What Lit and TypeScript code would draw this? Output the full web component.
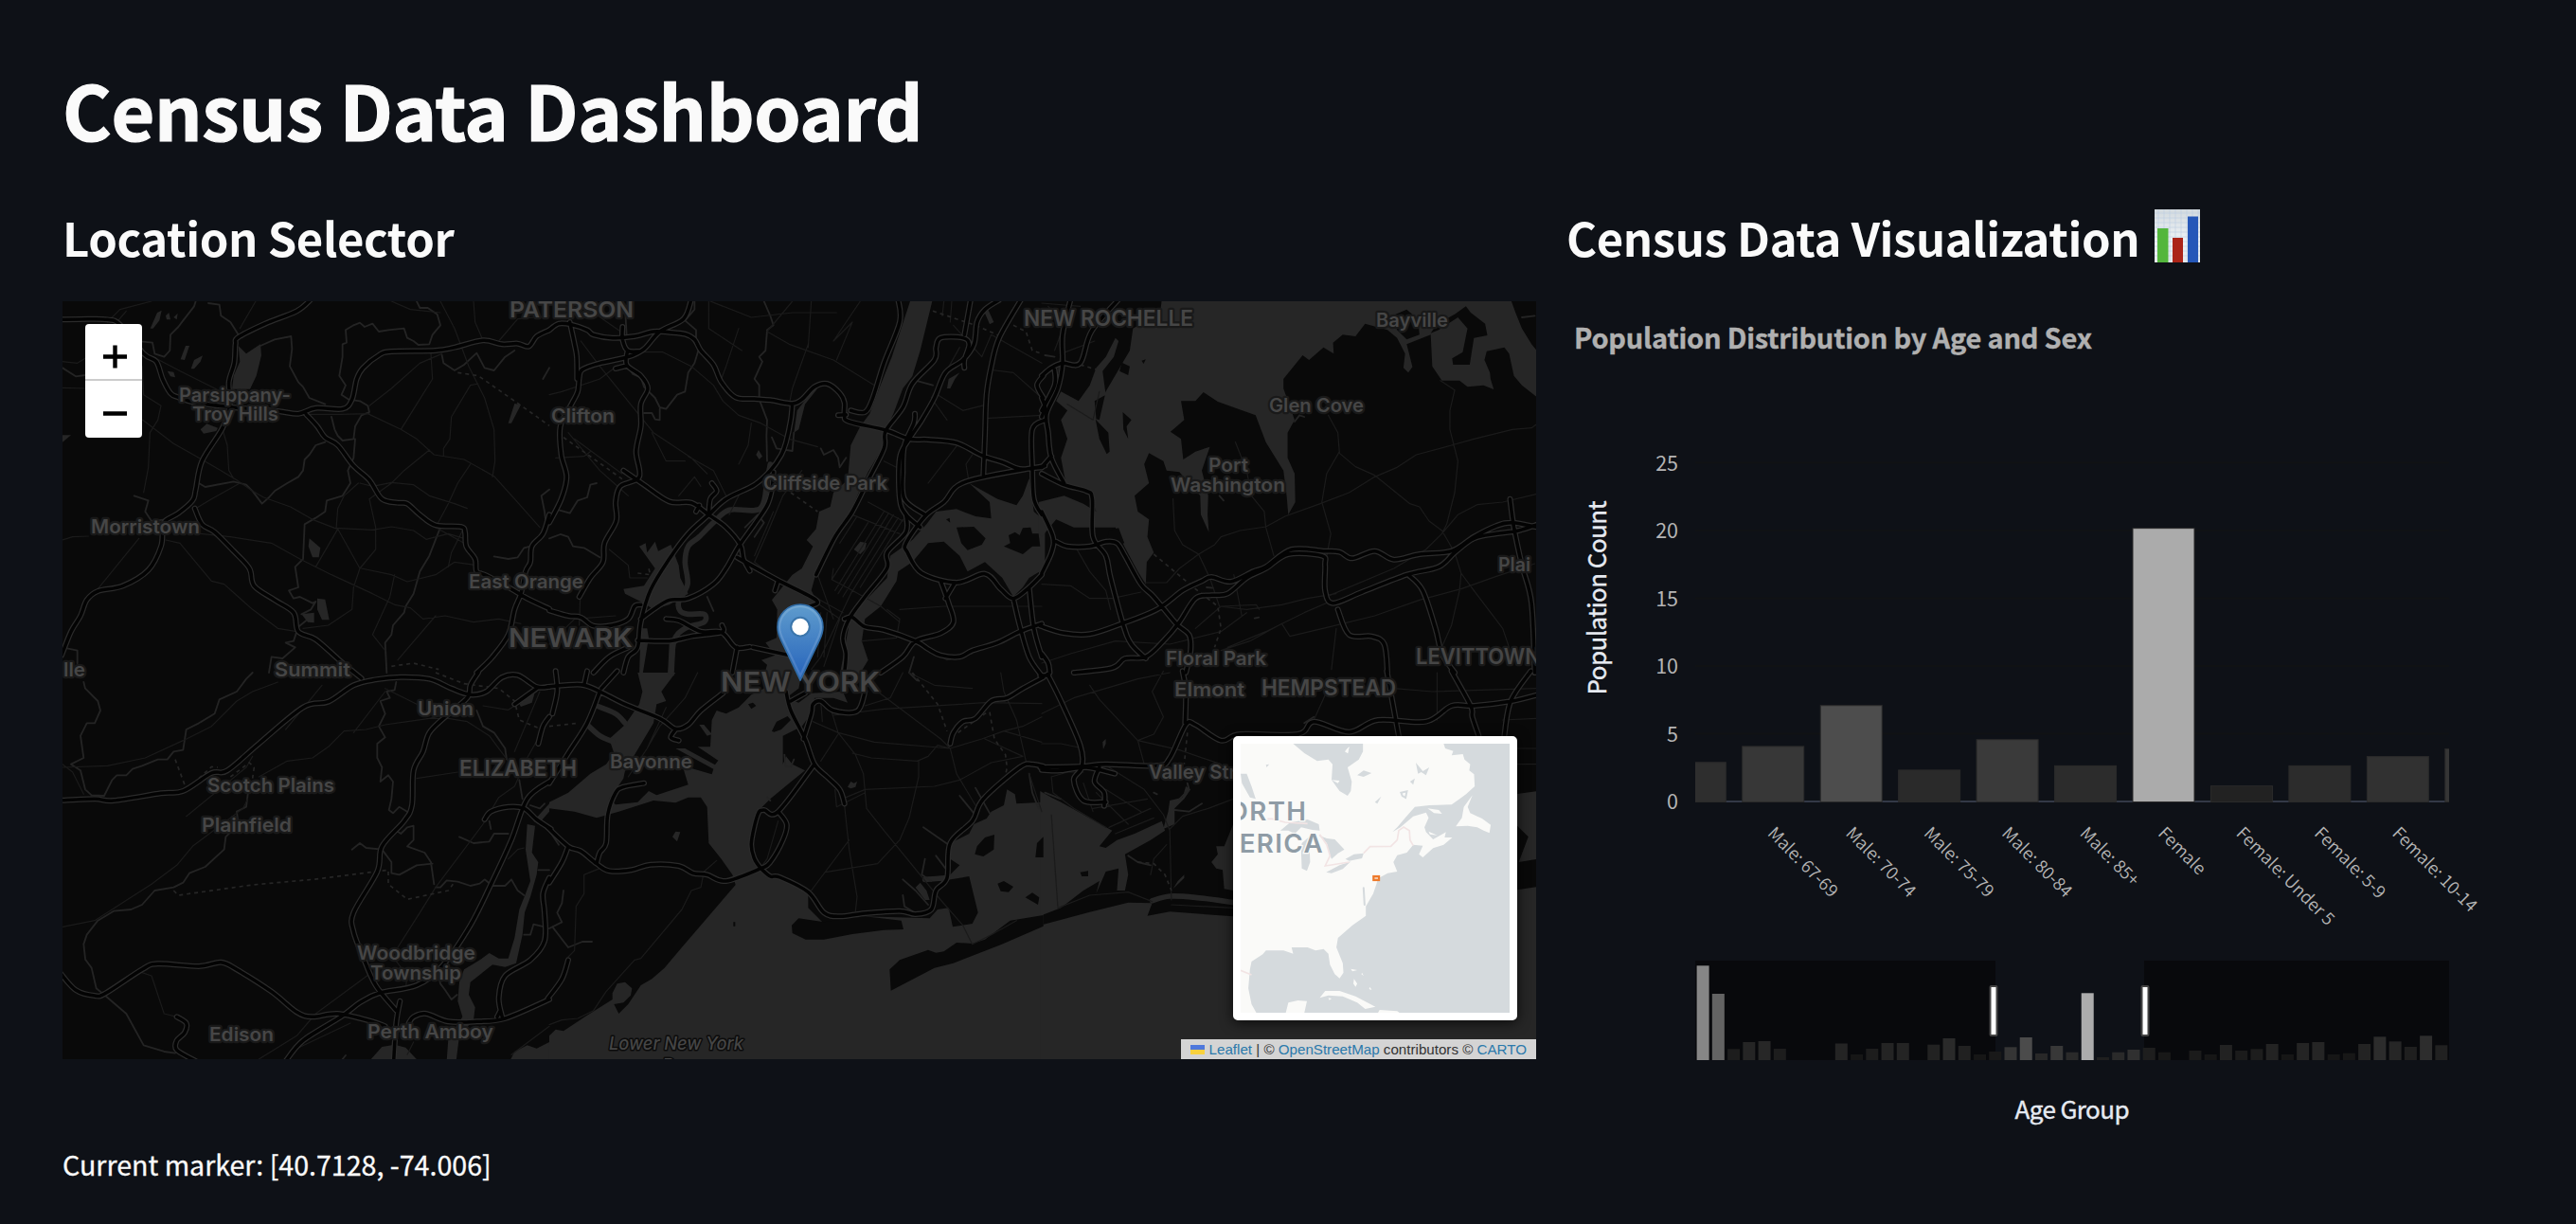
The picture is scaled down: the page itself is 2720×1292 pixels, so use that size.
import { LitElement, html, svg, css } from "lit";
import { customElement } from "lit/decorators.js";

interface Tile {
  at: string;
  water?: string[];
  land?: string[];
  channel?: string[];
  stream?: string[];
  minor?: string[];
  dash?: string[];
  road?: string[];
}

/* Every tile uses three local units per pixel; `at` places it on the map. */
const TILES: Tile[] = [
  {
    at: "translate(-6 -8) scale(.33333)",
    water: [
      "575,165 600,190 645,160 648,195 632,260 612,302 555,302 560,260 580,215",
      "455,430 475,412 510,425 505,435 465,443", "800,775 835,805 830,835 810,835 797,800",
      "825,965 850,968 863,1033 840,1033 825,1000", "775,1015 815,1010 815,1042 795,1040",
      "296,110 318,60 332,53 325,85 305,110", "18,448 45,448 18,470", "425,238 435,210 462,196 455,215 435,238",
      "1450,348 1470,352 1440,410 1430,410", "392,208 408,165 420,165 405,210", "350,245 370,248 375,265 360,262",
      "345,70 355,60 360,82 348,82", "370,75 383,62 380,82",
    ],
    stream: [
      "480,30 515,35 520,70 550,90 575,130", "440,24 435,40 400,85 385,105 360,130 358,180 340,200 310,190 303,155 272,152",
      "645,165 690,145 742,135 745,175 738,230 765,280 780,295 800,330 850,350",
      "940,100 960,92 975,105 1000,95 1020,120 1050,115 1100,110 1110,140 1130,150 1145,162 1180,160 1190,130 1215,100 1205,65 1175,45 1150,45 1140,24",
      "940,100 915,115 918,155 905,160 905,200 895,260 915,290 902,320 925,335", "925,335 960,340 985,355 990,375 965,385 945,420 940,460 905,465 890,450 880,430 870,390",
      "850,470 820,480 800,510 785,525 780,560 765,580 730,600 690,625 672,645 650,665 620,625 600,605 560,595 470,612 450,600",
      "945,460 940,520 922,560 930,600 905,640 855,655 850,690 820,710 785,730 780,840 755,865 765,930 735,940 750,965 770,960 810,980 820,975 805,1000 775,1015",
      "790,1035 765,1055 750,1100 725,1105 755,1120 715,1155 680,1150 672,1200",
      "1215,740 1180,830 1150,880 1130,950 1105,990 1100,1010 1065,1050 1060,1080 1040,1105 1045,1200",
      "1220,195 1225,220 1260,243 1290,225 1330,188 1355,235 1385,243 1420,200 1450,180",
      "1560,620 1535,640 1545,690 1550,730", "1385,832 1430,840 1460,835 1480,805 1500,800", "245,640 290,655 280,690 300,720 345,715",
      "18,235 60,262 90,258", "18,1120 65,1130 65,1170", "1560,235 1540,270",
    ],
    minor: [
      "305,200 400,250 520,310", "18,298 90,300", "272,400 370,475 450,520 520,560 570,590 620,625 655,645 740,675 810,715 880,742 1000,748 1060,738 1130,750 1170,778 1240,760 1290,775",
      "525,430 540,480 545,560 560,585", "270,230 275,320 330,355 320,400 295,440 290,550 275,630",
      "985,380 1090,430 1140,460 1195,510 1290,525 1385,578 1450,650 1530,740", "1335,285 1310,290 1250,390 1245,460 1225,490 1225,515",
      "1305,230 1355,330 1385,430 1388,530 1380,580", "455,760 550,770 680,790 770,840 870,890 1000,950 1070,985 1120,995 1160,1030 1230,1020 1320,1040 1400,1030 1470,1045",
      "960,600 1000,610 1060,598 1130,605 1180,640 1260,665 1300,680", "890,745 960,870 940,930 935,1000 860,1050 780,1060", "890,745 820,865",
      "960,870 1010,810 1010,740 990,650 1060,600 1100,560 1180,495", "965,870 1060,890 1110,912 1200,890 1260,850 1330,860", "955,600 910,640 890,680 885,745",
      "18,780 50,770 100,768", "260,775 130,935", "345,780 390,790 490,910 530,920 620,1000 700,1060 760,1070", "1185,190 1190,270 1140,350 1090,430",
      "1220,190 1150,220 1060,300 990,355", "1215,24 1260,110 1305,230", "1310,540 1270,600 1240,665 1200,740", "1200,1020 1080,1160", "1200,740 1290,790",
      "790,382 900,382 990,380", "630,24 580,110", "300,24 200,50 160,90", "1320,24 1325,90 1350,148", "1060,24 1120,50 1215,60", "1070,890 1055,960 1000,1080 1040,1130",
      "220,55 190,90", "18,215 65,220 90,205", "580,600 490,650 440,680", "1240,865 1250,820 1290,740", "1560,70 1460,80 1400,150",
    ],
    dash: ["1270,250 1335,260 1400,305 1500,375 1560,418", "1060,1180 1130,1170 1210,1190"],
    road: [
      "10,82 100,80 160,82 200,98 275,190 315,215 335,270 360,315 385,328 440,345 560,360 700,372 765,380 820,362 905,365 935,335 950,270 970,235 1020,195 1060,183 1200,180 1260,170 1350,148 1410,160 1460,158 1495,167 1520,135 1560,115",
      "805,18 760,55 660,95 575,138 566,160 562,220 545,280 548,350 525,425 460,530 440,620 430,655 385,695 345,718 335,740 330,800 290,875 210,925 130,942 95,970 75,1020 45,1070 15,1145",
      "790,382 825,420 850,455 890,480 940,545 990,590 1030,650 1080,662 1110,665 1150,700 1200,733 1280,738 1293,755 1297,800 1325,840 1330,880 1360,892 1440,935 1490,965 1560,998",
      "437,680 460,730 500,755 560,815 610,870 625,925 690,970 750,1010 765,1070 820,1095 900,1165 965,1218",
      "1330,1200 1380,1150 1430,1080 1450,1000 1470,950 1485,880 1500,850 1505,800 1540,760 1560,700",
    ],
  },
  {
    at: "translate(514 -8) scale(.33333)",
    water: [
      "1143,24 1213,24 1175,180 1150,262 1120,300 1090,380 1065,432 1060,480 1010,565 980,630 950,700 905,765 880,820 845,885 830,940 845,970 815,1050 830,1140 800,1210 680,1210 690,1175 672,1160 715,1145 685,1105 720,1090 722,1000 705,970 770,890 800,870 835,800 815,780 845,745 855,690 890,675 900,630 945,590 955,480 985,420 1015,380 1045,300 1085,200",
      "1195,730 1225,690 1290,682 1350,705 1400,712 1395,660 1330,600 1420,650 1480,670 1500,640 1520,585 1535,690 1570,720 1570,870 1520,900 1500,930 1470,960 1435,900 1380,850 1325,880 1300,830 1250,785 1200,790 1150,850 1105,880 1100,910 1050,990 1000,1030 990,1100 1010,1160 980,1210 920,1210 940,1100 955,1020 1070,900 1080,830 1150,780",
      "285,800 305,790 310,820 335,785 345,815 385,795 410,860 415,900 440,950 380,985 330,1000 300,980 240,950 235,935 300,925 335,870",
      "965,810 985,785 1005,790 1000,810 985,825", "1260,300 1265,270 1300,250 1285,270 1270,300", "655,510 663,495 675,515 665,525", "290,1060 310,1060 315,1090 295,1210 285,1210", "375,1210 380,1110 405,1085 440,1080 400,1110 395,1210",
      "1375,50 1390,50 1408,90 1395,97", "775,440 785,370 835,305 850,300 810,350 790,430",
    ],
    land: ["1290,740 1345,738 1382,775 1370,795 1325,812 1305,790", "1440,800 1460,790 1455,765 1475,755 1490,765 1500,742 1525,740 1530,760 1550,760 1555,800 1530,800 1500,825", "1257,715 1268,710 1270,725"],
    channel: ["700,540 690,590 668,680 570,685 520,725 475,770 440,800 430,850 438,920 410,975 415,1005 440,1015 490,1015 490,1040 430,1060 395,1100 385,1200"],
    stream: [
      "245,225 265,255 290,265 300,295 335,330 350,360 370,365 405,320 430,310 440,250 460,220 475,170", "350,365 350,400 335,398 325,378 300,378",
      "680,24 700,70 710,100 690,115 685,180 665,200 675,215 650,270 665,290 665,335 690,400 688,450 690,530", "460,24 460,50 430,85 465,115 465,150",
      "705,455 720,490 770,498 775,440", "240,45 245,130", "150,600 130,605 120,645 90,655 65,695 30,685", "0,775 35,762 60,770 75,800 110,805 160,835", "1160,275 1215,290", "1155,1150 1140,1200",
      "860,490 870,510 900,495 915,520 920,550 940,520", "620,740 660,700 680,725 650,770", "500,960 520,1005",
    ],
    minor: [
      "510,24 640,75 770,60 910,60", "770,24 690,120 760,160 900,210 1030,290", "100,150 160,230 330,440 450,520 500,570", "290,185 360,185 450,230 520,290 550,340 600,385 670,410 760,460 850,485", "240,130 140,60", "60,440 160,560 250,640",
      "820,160 770,300 760,350", "900,150 960,90 910,210", "325,440 370,530 430,530", "410,640 460,580 480,610", "830,24 820,170", "985,24 900,150", "600,640 570,700", "1250,24 1245,70", "1275,24 1270,90", "1400,130 1560,220", "1380,395 1560,385",
      "1010,725 895,905 900,870", "975,705 920,790", "850,890 900,1030", "1090,700 930,960", "1105,710 955,950", "1075,695 915,950", "1060,690 905,940", "1120,715 985,930", "960,700 1110,760", "1010,660 1120,720", "1560,330 1470,250 1390,240", "1300,170 1210,330 1260,400", "1230,320 1310,370 1390,350",
      "1330,600 1320,540 1340,510", "895,905 960,940 1050,990 1110,1040", "1110,1000 1250,990 1560,990", "990,1100 1100,1090 1110,1030 1070,1000", "800,560 740,640 690,760 650,850 720,905", "190,810 250,860 255,900 310,900", "20,520 110,515 130,500", "0,320 40,310 160,270 200,240",
      "505,24 505,110 610,180", "600,110 560,230 545,270", "640,410 630,480 600,540", "0,1110 80,1030 210,1020", "100,900 95,1050", "1160,1100 1260,1160 1340,1140", "820,960 920,1030 870,1180", "840,960 930,1010", "860,1010 850,1150", "880,1010 870,1150",
      "1280,100 1370,200 1400,130", "1300,470 1200,600", "1060,530 1120,560", "230,570 80,460", "440,515 520,560 560,640", "710,690 650,830", "960,940 860,1150 830,1190",
    ],
    dash: ["45,455 235,590", "1215,55 1350,100 1430,135", "1470,100 1510,120 1530,180 1560,190", "765,630 850,690", "280,885 320,890 315,870"],
    road: [
      "0,115 30,95 70,98 120,115 140,130 200,140 270,135 330,120 380,122 430,128 460,145 480,180 520,225 545,280 590,328 650,333 700,337 770,348 800,335 840,295 880,285 920,315 935,345 935,385 950,405 1065,432 1140,460 1200,462 1290,472 1370,512 1440,535 1490,555 1560,550",
      "450,18 425,80 350,120 300,175 250,200 160,220 105,240 95,265 90,310 70,350 35,420 38,510 55,580 38,650 0,725", "65,90 80,160 87,200 88,270",
      "232,105 232,145 248,180 285,183", "248,180 245,225 290,260 312,300 290,350 290,420 275,500 285,580 225,610 210,660 212,720 175,790 170,850 130,900 95,960", "245,228 210,237",
      "235,560 300,605 380,658 450,662 505,700 560,740 605,795 615,840 635,878", "770,350 765,400 750,470 735,510 700,560 650,605 560,650 505,700 440,760 380,840 320,940 290,1040 280,1120 250,1150 235,1200",
      "710,565 705,620 690,670 650,730 600,800 560,870 520,920 440,965 380,970 330,1000 290,1030", "1105,18 1110,90 1060,220 1025,330 1000,375 955,370", "915,385 940,383",
      "1315,235 1315,210 1330,160 1310,140 1240,140 1225,170 1220,210 1150,285 1120,360 1065,435 1060,490 1010,590 960,690 905,770 845,890", "1335,18 1315,130",
      "1425,20 1380,50 1355,90 1345,160 1310,210 1255,250 1220,330 1180,400 1140,460 1110,520 1110,650 1130,700 1175,740", "1158,380 1155,410 1125,480 1120,560 1125,650 1190,700",
      "1495,18 1425,140 1400,230 1385,320 1380,450 1375,575", "1570,545 1320,595 1250,660 1190,705 1130,790 1135,820 1180,885 1290,915 1380,887 1430,935 1470,965 1520,930 1560,890",
      "1130,700 1130,755 1070,820 1070,870 1000,960 950,1030 930,1090 940,1140 935,1200", "935,1030 960,1025 1000,1055 1060,1065 1160,1100 1200,1125 1240,1145 1300,1150 1340,1130 1420,1105 1490,1070 1560,1045",
      "1240,910 1265,980 1280,1040 1240,1075 1160,1100 1120,1150 1050,1200", "1285,915 1255,965", "1470,965 1490,1050 1520,1150 1560,1210", "1520,930 1535,1060 1560,1150", "595,835 720,905 845,970 825,990", "725,908 715,940",
      "0,1003 60,1020 100,1025 140,1052 200,1050 250,1030 270,990 290,985", "370,1030 410,1035 480,1070 545,1072 590,1120 635,1118", "280,1098 380,1100 450,1085 545,1072 547,1050", "595,1120 580,1200", "645,1120 760,1145",
      "1565,260 1545,290 1565,330", "1570,400 1530,430 1530,550 1535,650 1560,700", "505,700 510,650 530,625 515,600", "140,1200 190,1150 250,1120", "465,690 475,670",
    ],
  },
  {
    at: "translate(1034 -8) scale(.338 .33333)",
    water: [
      "375,18 1465,18 1480,60 1500,110 1530,160 1550,185 1550,330 1500,290 1475,260 1460,190 1445,170 1390,182 1383,210 1400,250 1402,270 1412,303 1380,290 1330,295 1305,275 1250,275 1220,230 1215,130 1140,160 1158,232 1145,250 1130,235 1135,190 1110,140 1080,115 1010,95 980,135 940,130 910,155 912,190 880,170 835,210 815,195 855,160 852,130 905,152 815,195 755,270 755,300 790,400 768,440 768,520 790,570 792,660 770,700 765,640 755,560 700,470 668,385 550,342 505,312 480,340 435,340 445,400 402,437 435,460 442,525 480,500 525,485 500,560 520,640 518,700 522,755 497,700 495,640 430,565 390,560 380,530 335,505 320,540 335,600 290,640 300,690 335,715 330,770 350,820 328,850 325,920 300,880 258,800 230,740 160,740 100,740 45,715 0,770 -10,760 -10,660 70,640 130,665 170,690 150,630 75,600 60,520 80,460 60,400 80,370 45,340 60,310 115,340 150,290 170,235 200,200 230,140 240,150 225,200 190,245 200,320 165,340 170,395 130,440 120,380 180,400 200,310 275,180 285,110 370,60",
    ],
    land: [
      "1325,40 1340,60 1385,95 1392,132 1350,140 1337,225 1285,225 1282,205 1315,185 1330,110 1300,75 1240,115 1215,125 1235,95 1290,65", "250,218 275,230 270,258 243,245", "253,375 280,400 265,420 270,460 255,430",
      "168,398 208,440 212,500 203,508 180,460", "1095,70 1140,50 1175,80 1180,130 1140,145 1110,115", "210,750 240,742 258,790 235,795 205,775", "312,212 325,208 318,222",
    ],
    stream: ["790,405 805,385 820,390", "555,640 568,655", "1500,75 1540,70", "665,1028 678,1025", "515,930 535,932", "10,195 40,200"],
    minor: [
      "325,915 390,915 430,870 490,825 540,795 560,770 620,750 700,738 760,705 870,665 960,630 1040,580 1110,550 1170,510 1280,480 1350,460 1470,430 1530,425 1544,415",
      "895,385 925,440 930,505 980,548 1040,575 1150,665 1180,675 1210,720 1250,750 1290,820 1310,885 1305,940 1280,1050 1245,1130", "930,500 890,570 875,660 903,760 885,860",
      "1245,275 1290,305 1275,370 1275,430 1300,530 1290,630 1265,730 1250,760 1200,810 1100,870 900,955", "1250,760 1300,700 1360,668 1440,660 1544,635", "410,650 415,750 440,795 490,825 525,900 555,990",
      "605,470 640,560 655,640 695,690 700,740 725,830", "0,920 90,925 150,965 220,965 310,945", "110,810 150,880 200,940 215,1000", "480,1060 560,990 670,985 680,1000", "580,1120 700,1070 820,1010 900,975", "555,990 640,1000 750,985 830,965 920,950",
      "0,1170 90,1140 230,1100 400,1110 560,1070 640,1010", "750,1045 775,1085 900,1055 1040,1020 1180,970 1310,935 1420,895 1540,855", "750,1045 650,1100 560,1130", "920,1060 905,1190", "1310,885 1350,940 1440,1060 1470,1150", "600,890 625,1020",
      "80,350 160,400 180,310", "20,40 70,100 40,180", "0,30 120,40", "165,150 60,190 50,250",
    ],
    dash: ["350,825 480,935 550,990 560,1060 540,1120", "120,225 170,240"],
    road: [
      "90,18 65,130 65,220 50,300 15,380 20,440 30,520 70,600", "240,18 155,120 120,220 65,220 30,235 0,260", "0,390 10,360 0,330", "40,240 40,290 0,370", "0,570 70,605 140,625 158,650 160,770 200,830 215,900 255,1050 280,1110 325,1155",
      "0,550 30,515", "0,690 35,770 30,820 0,885", "45,785 80,800 150,800 200,785 235,790 260,830 310,920 350,960 420,1045 460,1080 465,1130 450,1200",
      "-5,1052 70,1075 150,1078 250,1045 360,1000 440,940 500,910 530,897 590,912 660,880 700,865 780,810 880,815 930,818 970,838 1040,815 1100,842 1180,825 1280,815 1350,770 1420,735 1470,725 1550,740",
      "100,1200 220,1185 260,1155 325,1150 380,1100 430,1040 480,965 530,955 580,950 640,900 700,870 770,825 875,830 885,860 885,940 910,980 1000,945 1140,890 1240,865 1290,820 1350,775 1420,760 1490,750 1550,730",
      "925,1000 960,1080 1030,1085 1070,1110 1080,1200", "1145,890 1190,940 1230,1060 1250,1140 1290,1200", "1463,650 1475,740 1500,860 1530,980 1540,1200", "0,1140 20,1170 25,1200",
    ],
  },
  {
    at: "translate(-6 392) scale(.33333)",
    water: [
      "1490,480 1515,485 1505,570 1525,600 1520,640 1500,710 1482,760 1475,830 1455,920 1420,932 1380,925 1310,980 1305,1020 1325,1060 1320,1100 1275,1150 1265,1230 1235,1230 1240,1160 1285,1090 1270,1040 1275,980 1290,940 1340,910 1370,888 1400,905 1430,905 1450,840 1465,750 1485,700 1500,660 1485,560",
      "990,1230 1030,1185 1070,1178 1105,1187 1145,1230", "1435,1230 1450,1200 1470,1190 1490,1180 1520,1190 1560,1170 1560,1230", "1510,470 1560,415 1560,440 1525,480", "1465,100 1515,60 1505,95 1470,108",
    ],
    stream: [
      "85,30 90,50 130,90 138,120 120,160 95,160 75,200 85,270 45,290 75,310 90,370 110,388 150,390 175,340 190,325 220,325 240,305 270,295 320,275 350,275 370,250 400,245 410,180 450,160 500,130 515,85 570,60 600,20 620,0",
      "605,385 600,425 570,440 575,480 535,520 530,560 470,615 420,635 400,665 370,680 310,690 270,735 235,750 180,755 130,785 95,830 85,860 90,905",
      "1075,30 1070,55 1045,60 1055,80 1025,90 1040,130 1020,170 1040,205 1015,225 1015,270 1030,300 1025,345 1050,325 1065,345 1060,400 1052,435 1065,445 1085,425 1110,440",
      "1165,570 1110,550 1130,530 1130,485 1110,490 1090,510 1075,500", "1165,570 1185,600 1195,670", "935,560 960,540 980,555 1030,560 1060,600 1060,635 1085,640 1140,610 1190,605", "1330,120 1350,170 1385,190 1420,240 1425,275",
      "1200,680 1215,680 1235,658 1270,662 1310,675 1340,668 1355,655 1380,675 1420,675 1440,655 1460,690 1480,705", "1275,520 1320,540 1370,535 1385,510 1430,510", "1205,940 1215,985 1230,1005 1250,1035 1268,1020", "1480,830 1500,830 1510,797 1545,805",
      "90,908 110,935 125,1000 150,1020 220,1080 275,1180 340,1200 375,1205", "1465,340 1475,400", "1500,420 1530,430 1545,415", "1370,470 1375,495", "1560,625 1525,625", "905,1224 915,1212",
    ],
    minor: [
      "18,300 160,295 280,270 400,215 490,170 570,90 620,60 700,30", "410,455 600,300 620,265", "640,330 730,280 810,270 860,235 910,185 980,180 1040,165 1180,145 1240,145 1300,155 1370,200 1430,280", "1240,130 1180,145",
      "18,805 120,785 300,670 380,610 430,550 590,430 605,400", "1140,335 1270,315", "1080,870 1150,760 1200,680 1350,480 1400,395 1450,360 1490,270 1535,190", "640,1224 760,1150 820,1080 990,955", "270,950 300,960 340,1080 380,1090",
      "18,290 50,315 85,385", "1050,880 1110,960 1105,1000", "940,190 1040,60", "1040,50 1140,100", "1530,60 1450,250", "725,180 840,40", "1110,1210 1130,1170", "1350,105 1430,118 1520,60", "1440,1210 1560,1120", "930,1110 740,1200", "1430,590 1460,560 1480,555",
    ],
    dash: ["375,275 405,355", "370,690 385,705 620,672 810,655 1050,625 1050,670 1110,718 1240,690 1255,670", "450,335 490,298 510,300", "550,330 610,285 625,300 620,335", "1200,0 1290,35 1400,50 1450,90 1465,150 1525,175"],
    road: [
      "10,405 120,400 180,405 330,382 400,375 490,318 540,310 640,225 780,110 860,92 940,40 1010,22 1090,14 1180,20 1250,50 1310,70 1360,60 1410,15 1460,8 1520,45 1560,45",
      "1335,0 1310,40 1300,80 1230,140 1180,190 1160,250 1130,310 1125,420 1100,470 1030,550 1015,630 940,760 940,820 970,900 1010,990 1075,1070", "1087,1040 1075,1110 1067,1230",
      "10,950 60,1005 120,1023 155,1015 270,940 320,922 450,930 520,917 570,940 680,1010 760,1075 810,1090 890,1080 1000,1105 1040,1120",
      "725,1230 780,1165 900,1090 960,1045 1020,1015 1140,990 1220,930 1310,800 1380,660 1440,530 1490,400 1560,345", "1115,1110 1130,1090 1170,1080 1240,1105 1330,1105 1420,1095 1560,1035",
      "1412,1095 1400,1030 1420,960 1500,910 1545,850 1545,760 1540,700 1560,650", "1395,1090 1405,1070", "1355,465 1375,440 1430,425 1480,430 1520,465 1565,495", "380,1090 410,1110 405,1140 380,1165 380,1195 440,1230", "1450,100 1520,50", "1560,140 1540,170 1525,225",
    ],
  },
  {
    at: "translate(514 392) scale(.33333)",
    water: [
      "680,0 800,0 790,50 750,80 790,95 830,65 930,60 945,95 900,80 840,80 830,130 800,170 740,200 740,290 750,265 770,290 810,310 760,350 700,400 670,430 645,480 640,560 670,620 720,650 790,680 820,700 820,745 870,795 1000,772 1205,778 1230,750 1265,745 1278,805 1340,795 1358,760 1330,645 1240,660 1200,660 1270,640 1300,610 1270,590 1270,540 1330,510 1345,480 1385,462 1400,440 1440,420 1450,370 1475,385 1480,415 1565,410 1565,1260 0,1260 0,1150 20,1130 45,1135 120,1085 200,1035 200,1015 215,985 240,980 262,1000 258,1022 235,1045 205,1050 220,1080 250,1050 290,990 325,970 365,935 420,870 590,672 580,640 545,590 505,540 500,425 480,395 440,395 400,412 330,405 220,440 150,460 80,440 0,430 0,410 60,380 130,320 190,320 240,310 235,335 190,400 210,418 280,410 315,375 340,388 440,355 425,305 440,300 515,322 520,305 400,240 430,240 525,292 535,278 470,235 510,235 515,150 530,120 560,130 600,110 640,70 680,50",
      "280,0 400,0 355,60 370,90 340,100 330,160 270,260 230,330 130,320 180,290 205,255 190,210 240,165 285,100 295,60",
      "390,520 400,503 415,505 405,535", "945,362 955,345 965,350 975,345 970,362 955,367", "1160,680 1175,665 1195,690 1205,720 1190,720", "475,165 490,165 515,195 500,200",
    ],
    land: [
      "705,185 720,155 755,138 765,150 735,180 712,188", "768,800 790,778 870,790 1000,772 1115,785 1122,813 1060,815 960,828 870,845 812,845 770,825",
      "1078,940 1110,910 1200,878 1225,887 1250,883 1290,855 1340,858 1380,845 1460,785 1565,768 1565,803 1430,862 1280,920 1220,935 1082,1007", "1348,575 1355,550 1380,522 1410,513 1408,560 1375,582", "1420,668 1440,660 1470,678 1455,695 1430,692", "1508,712 1530,697 1552,712 1548,735",
      "583,790 589,790 589,803 583,803", "630,100 645,95 655,105 640,115", "1545,540 1565,520 1565,585 1540,585",
    ],
    channel: ["150,105 210,130 240,160", "120,165 160,200 200,218", "1190,655 1260,650"],
    stream: ["45,690 40,730 25,760 40,790 0,810", "10,805 60,870 105,852 135,852", "1185,490 1265,545", "1120,655 1160,690 1200,735", "1225,580 1255,620", "1300,390 1345,445", "1190,590 1180,640 1210,660", "1120,705 1125,740 1150,755", "745,260 748,295 765,298 775,275", "1140,0 1165,25", "700,405 690,395", "1350,365 1395,445", "0,500 30,545", "1520,320 1530,380 1550,430"],
    minor: [
      "890,110 915,190 970,260 995,320 1005,430 1060,500 1240,720 1310,800 1340,860 1400,830 1480,785", "835,155 915,190 1030,220 1270,240 1370,210 1440,185 1500,170 1560,140", "915,195 860,280",
      "960,255 1020,270 1165,280 1200,265 1230,230 1270,240 1290,320 1350,420", "940,395 1000,370 1220,360 1300,340 1400,285 1500,265", "1170,280 1170,330 1140,460 1110,530 1040,605 875,632", "935,420 950,560 975,710 970,755", "950,530 830,690",
      "1040,60 1240,210 1270,240", "900,135 1060,115 1380,95 1560,98", "1430,0 1440,60 1480,150 1510,280", "1120,0 1080,80 1000,105", "160,620 110,640 110,700 85,740 80,880 60,900", "530,595 490,630 480,680 450,690 420,750 290,905 270,910 180,1010 140,1070 90,1095 40,1100 0,1115",
      "310,240 350,170 430,80 470,0", "250,330 310,240 370,110", "1380,210 1500,265", "905,370 910,425 1000,380", "725,470 690,590 675,610", "840,290 720,440", "1440,185 1560,220", "1140,0 1220,40 1340,50", "860,90 865,155", "1520,320 1560,440",
    ],
    dash: ["1150,0 1230,100 1260,185", "1295,190 1380,130 1395,125 1410,210 1445,260 1450,300 1440,350", "0,170 90,160"],
    road: [
      "-5,45 100,38 160,60 240,100 350,145 400,178 440,165 480,120 550,65", "160,60 120,160 60,255 0,350", "215,-5 165,50", "20,-5 25,60 10,130", "400,180 385,205 410,215", "120,-5 110,40",
      "750,60 765,120 810,210 840,290 880,330 920,370 935,415", "765,90 810,65", "805,210 830,130 835,100 860,90 900,120 975,122 1000,60", "840,290 725,440 680,435 660,450 640,540 650,590 670,620",
      "725,440 752,480 740,530 700,600 670,620 560,660 500,640 455,635 410,612 320,608 260,625 190,628 150,605 100,565 60,550 -5,490", "670,620 700,645 730,648 820,695 870,760 920,772 1000,762 1110,755 1160,765 1210,750 1225,690 1260,650 1270,540 1340,470 1375,400 1490,300 1530,290 1565,297",
      "60,550 40,600 0,665", "150,605 160,570 180,540 185,450 210,380 235,362 300,350", "1270,225 1280,190 1310,155 1350,145 1400,90 1450,80 1500,50 1565,15", "60,910 40,970 -5,1032",
    ],
  },
  {
    at: "translate(1034 392) scale(.338 .33333)",
    water: [
      "-5,375 30,395 60,410 220,500 180,550 200,555 235,530 290,510 375,470 385,500 340,530 260,575 270,640 260,690 235,690 240,620 200,630 170,700 180,660 130,690 60,745 -5,770",
      "-5,800 150,758 270,728 345,730 330,770 400,757 598,772 1000,760 1550,678 1550,1260 -5,1260", "530,600 550,575 545,550 570,550 598,480 598,690 570,685 565,625 545,620", "1480,385 1550,375 1550,590 1490,600 1520,520 1480,480", "190,220 200,210 200,225 192,243", "385,475 395,440 400,405 440,395 450,360 465,370 445,400 415,430 415,480 380,495", "425,660 445,640 445,650 410,685",
    ],
    land: ["120,632 145,628 145,645 125,645"],
    channel: ["345,722 400,708 480,712 600,728"],
    stream: ["415,435 460,440 500,415", "455,350 460,370 430,400", "350,380 360,385", "10,380 60,400", "270,580 300,600 340,610", "820,160 850,140"],
    minor: [
      "150,40 180,85 300,215 350,195 380,140 345,60 380,-5", "0,130 100,80 300,20 400,0", "300,215 320,290", "300,215 430,245 560,290", "0,225 60,225 130,240", "210,300 320,370 380,450 400,500 405,720", "400,495 440,455 520,430 598,400", "30,450 50,740", "30,330 35,380 100,430 200,490", "30,330 80,315 130,315",
      "50,745 150,705 270,695 345,725", "405,735 598,745", "850,150 890,60", "1235,0 1235,150", "340,640 350,590 390,545", "1485,240 1544,240", "1485,290 1544,290", "1100,50 1220,60 1544,50", "1440,150 1544,145",
      "130,350 160,440", "170,380 270,480", "200,370 310,440", "160,430 330,400", "210,490 340,430", "230,510 350,460",
    ],
    dash: ["455,190 445,290", "300,600 350,605 385,640 405,690"],
    road: [
      "-5,300 120,297 200,290 360,295 400,270 450,165 480,165 560,215 620,195 800,195 850,155 960,188 1050,150 1200,155 1280,105 1350,105 1470,90 1550,70", "18,5 60,90 120,230 125,300 100,340 130,405 200,410", "0,308 60,310 140,300 228,320",
      "440,-5 450,60 448,160", "180,300 165,345 195,380 195,422", "1078,-5 1115,200", "1280,-5 1340,105 1345,140 1365,200", "1528,-5 1465,90 1445,200", "-5,10 22,8",
    ],
  },
];

const nums = (s: string) => s.split(" ").map((p) => p.split(",").map(Number));

/* Straight line through the points. */
const line = (s: string) => "M" + s.replace(/ /g, "L");
const area = (s: string) => line(s) + "Z";

/* Catmull-Rom curve through the points. */
const curve = (s: string) => {
  const p = nums(s);
  let d = `M${p[0]}`;
  for (let i = 0; i < p.length - 1; i++) {
    const a = p[i - 1] ?? p[i], b = p[i], c = p[i + 1], e = p[i + 2] ?? c;
    d += `C${b[0] + (c[0] - a[0]) / 6},${b[1] + (c[1] - a[1]) / 6} ${c[0] - (e[0] - b[0]) / 6},${c[1] - (e[1] - b[1]) / 6} ${c[0]},${c[1]}`;
  }
  return d;
};

const layer = (key: keyof Tile, cls: string, draw: (s: string) => string) =>
  TILES.map((t) => svg`<g transform=${t.at}><path class=${cls} d=${((t[key] as string[]) ?? []).map(draw).join("")}></path></g>`);

/* text, left, baseline, width, size */
const PLACES: [string, number, number, number, number][] = [
  ["PATERSON", 472, 17, 131, 23], ["Parsippany-", 123, 106, 118, 20], ["Troy Hills", 137, 126, 91, 20], ["Clifton", 516, 128, 67, 20],
  ["Morristown", 30, 245, 115, 20], ["East Orange", 429, 303, 121, 20], ["NEWARK", 471, 365, 131, 27], ["Cliffside Park", 740, 199, 131, 20],
  ["NEW ROCHELLE", 1015, 26, 179, 23], ["Bayville", 1387, 27, 76, 20], ["Glen Cove", 1274, 117, 100, 20], ["Port", 1210, 180, 42, 20],
  ["Washington", 1170, 201, 121, 20], ["Floral Park", 1165, 384, 106, 20], ["LEVITTOWN", 1429, 383, 132, 23], ["Plai", 1516, 285, 34, 20],
  ["lle", 1, 396, 23, 20], ["Summit", 224, 396, 80, 20], ["Union", 375, 437, 59, 20], ["ELIZABETH", 419, 501, 124, 23], ["Scotch Plains", 153, 518, 134, 20],
  ["Plainfield", 147, 560, 95, 20], ["Woodbridge", 311, 695, 125, 20], ["Township", 325, 716, 96, 20], ["Edison", 155, 781, 68, 20],
  ["Perth Amboy", 322, 778, 133, 20], ["Bayonne", 578, 493, 87, 20], ["NEW YORK", 695, 412, 168, 29], ["Elmont", 1174, 417, 74, 20],
  ["HEMPSTEAD", 1266, 416, 142, 23], ["Valley Stream", 1147, 504, 134, 20],
];

const BARS: [string, number][] = [
  ["", 2.92], ["Male: 67-69", 4.1], ["Male: 70-74", 7.12], ["Male: 75-79", 2.35], ["Male: 80-84", 4.6], ["Male: 85+", 2.67],
  ["Female", 20.2], ["Female: Under 5", 1.18], ["Female: 5-9", 2.67], ["Female: 10-14", 3.35], ["", 3.92],
];

const OVERVIEW = [
  99.7, 70, 11.7, 19, 20, 12, 0, 0, 0, 17.5, 6, 12, 18, 18, 0, 16.3, 23, 15, 6, 9, 13.7, 24, 7, 15, 8.3, 70.7, 3, 8.3, 11, 13, 8.3, 0, 10, 6, 16,
  10, 11.7, 17, 6, 18, 19, 6, 7.3, 17, 24.7, 19.7, 14, 25.7, 15.7,
];

const gray = (v: number, k = 1) => {
  const g = Math.round((25 + v * 7.25) * k);
  return `rgb(${g},${g},${g})`;
};

@customElement("city-map")
class CityMap extends LitElement {
  static styles = css`
    :host { display: block; position: relative; height: 800px; overflow: hidden; background: #090909; }
    .base { display: block; width: 1556px; height: 800px; }
    .water { fill: #262626; }
    .land { fill: #090909; }
    .channel, .stream, .minor, .dash, .casing, .core { fill: none; stroke-linejoin: round; stroke-linecap: round; }
    .channel { stroke: #262626; stroke-width: 17; }
    .stream { stroke: #242424; stroke-width: 5.5; }
    .minor { stroke: #1b1b1b; stroke-width: 3.6; }
    .dash { stroke: #262626; stroke-width: 5; stroke-dasharray: 12 12; stroke-linecap: butt; }
    .casing { stroke: #2b2b2b; stroke-width: 18; }
    .core { stroke: #030303; stroke-width: 10.5; }
    .place { fill: #464646; stroke: #191919; stroke-width: 4.5; paint-order: stroke; stroke-linejoin: round; font-family: Inter, sans-serif; font-weight: 600; }
    .sea { fill: #454545; stroke: #0c0c0c; font-style: italic; font-weight: 500; stroke-width: 3; }
    .zoom { position: absolute; left: 24px; top: 24px; width: 60px; height: 120px; display: flex; flex-direction: column; background: #fff; border-radius: 4px; overflow: hidden; }
    .btn { height: 58px; display: flex; align-items: center; justify-content: center; }
    .btn:first-child { border-bottom: 2px solid #ccc; }
    .btn svg { width: 25px; height: 25px; margin: 10px 0 0 3px; }
    .pin { position: absolute; left: 753px; top: 319px; width: 52px; height: 82px; }
    .inset { position: absolute; left: 1236px; top: 459px; width: 284px; height: 284px; border: 8px solid #fff; border-radius: 5px; box-shadow: 0 2px 14px rgba(0, 0, 0, .75); background: #fafaf8; }
    .inset svg { display: block; width: 284px; height: 284px; }
    .wet { fill: #d5dadd; }
    .dry { fill: #fafaf8; }
    .border { fill: none; stroke: #f2e4e4; stroke-width: 5; }
    .bay { fill: none; stroke: #d5dadd; stroke-width: 6; stroke-linecap: round; }
    .region { font: 600 82px Inter, sans-serif; fill: #8f9ca6; stroke: #fafaf8; stroke-width: 8; paint-order: stroke; }
    .credit { position: absolute; right: 0; bottom: 0; height: 21px; width: 355px; padding: 0 10px; display: flex; align-items: center; justify-content: space-between; background: #d4d4d4; font: 15.150px/21px "Liberation Sans", sans-serif; color: #333; white-space: pre; }
    .credit b { font-weight: 400; color: #2b79ab; }
    .flag { width: 15px; height: 10px; }
  `;

  render() {
    return html`
      <svg class="base" viewBox="0 0 1556 800">
        ${layer("water", "water", area)} ${layer("land", "land", area)} ${layer("channel", "channel", curve)}
        ${layer("stream", "stream", line)} ${layer("minor", "minor", line)} ${layer("dash", "dash", line)}
        ${layer("road", "casing", curve)} ${layer("road", "core", curve)}
        ${PLACES.map(([t, x, y, w, s]) => svg`<text class="place" x=${x} y=${y} font-size=${s} textLength=${w} lengthAdjust="spacingAndGlyphs">${t}</text>`)}
        <text class="place sea" x="577" y="790" font-size="19" textLength="142" lengthAdjust="spacingAndGlyphs">Lower New York</text>
        <text class="place sea" x="633" y="813" font-size="19">Bay</text>
      </svg>
      <div class="zoom">
        <div class="btn"><svg viewBox="0 0 25 25"><path d="M0 12.5H25M12.5 .5V24.5" stroke="#000" stroke-width="4.4"></path></svg></div>
        <div class="btn"><svg viewBox="0 0 25 25"><path d="M0 12.5H25" stroke="#000" stroke-width="4.4"></path></svg></div>
      </div>
      <svg class="pin" viewBox="-.5 0 26 41">
        <defs><linearGradient id="pin" x1="0" y1="0" x2="0" y2="1"><stop offset="0" stop-color="#5f9ccd"></stop><stop offset="1" stop-color="#2562bb"></stop></linearGradient></defs>
        <path d="M12.5 .5C5.8 .5 .5 5.9 .5 12.5c0 2.3 .8 4.7 2 7.2L12.5 40.5l10-20.8c1.2-2.5 2-4.9 2-7.2C24.5 5.9 19.2 .5 12.5 .5z" fill="url(#pin)" stroke="#2f6ba6" stroke-width=".8"></path>
        <path d="M12.5 1.6C6.4 1.6 1.6 6.5 1.6 12.5c0 2 .7 4.2 1.9 6.7L12.5 38l9-18.8c1.2-2.5 1.9-4.7 1.9-6.7C23.4 6.5 18.6 1.6 12.5 1.6z" fill="none" stroke="#fff" stroke-opacity=".13" stroke-width="1.1"></path>
        <circle cx="12.5" cy="12.3" r="4.9" fill="#fff" stroke="#3b76ac" stroke-width="1"></circle>
      </svg>
      <div class="inset">
        <svg viewBox="621 225 840 852" preserveAspectRatio="none">
          <path class="wet" d=${[
            "1255,225 1260,240 1285,248 1280,262 1315,258 1320,275 1338,290 1335,310 1350,322 1352,360 1325,385 1305,400 1280,418 1210,420 1165,425 1135,460 1110,490 1095,505 1120,490 1160,455 1200,443 1208,460 1195,490 1200,505 1222,528 1262,505 1258,522 1282,522 1255,545 1222,556 1190,585 1178,575 1190,548 1160,545 1140,570 1110,578 1098,600 1110,630 1080,635 1050,652 1045,670 1035,700 1012,740 1012,770 970,800 925,840 920,870 940,920 942,950 930,968 915,955 900,925 895,890 880,875 855,880 830,870 780,870 785,890 755,880 700,880 690,892 655,915 650,940 645,1000 655,1050 670,1077 762,1077 770,1045 800,1038 828,1040 820,1077 1461,1077 1461,225",
            "785,225 820,255 860,280 895,275 908,290 905,340 930,375 955,390 965,375 968,345 955,300 990,275 1003,250 1003,225", "621,320 640,320 655,360 668,400 650,395 625,350",
            "745,500 775,475 830,465 865,480 868,500 845,498 810,490 790,510 770,500", "812,540 835,520 838,600 828,628 812,620 810,570", "865,515 890,525 915,528 945,560 925,572 905,590 895,565 890,540", "888,632 930,610 965,598 940,622 905,635", "948,590 975,575 1005,572 1000,588 960,596",
            "985,325 1005,310 1030,318 1005,330", "1168,285 1175,320 1185,315 1200,325 1210,300 1190,312", "1040,410 1060,392 1048,415", "950,245 960,235 955,256", "700,292 710,290 702,300", "1150,345 1165,335 1160,355",
          ].map(area).join("")}></path>
          <path class="bay" d="M1005 682L1008 735M1122 380L1140 376L1136 396L1126 390Z"></path>
          <path class="dry" d=${[
            "1345,388 1330,425 1338,445 1360,455 1375,462 1402,482 1398,508 1380,500 1360,490 1330,485 1293,487 1312,460 1318,425", "1205,430 1240,435 1250,447 1225,445", "1208,503 1235,515 1212,512", "868,1030 885,1008 930,1008 980,1025 1042,1058 1010,1065 985,1045 940,1025 895,1022", "1055,1068 1110,1072 1117,1077 1050,1077", "895,1030 905,1032 898,1037",
            "975,970 985,985 980,995 973,985", "965,938 985,942 970,946", "1000,950 1005,960 998,955", "1025,995 1030,1005 1022,1002", "905,340 930,342 925,350", "946,250 960,235 956,256",
          ].map(area).join("")}></path>
          <path class="border" d="M705 463L720 463L760 474L830 478M868 512L890 545L900 580L885 612L960 600M1005 572L1025 551L1090 550L1110 530L1115 500L1130 489L1148 500L1150 530L1160 548M621 943L655 957"></path>
          <text class="region" x="829" y="467" text-anchor="end" letter-spacing="4">NORTH</text>
          <text class="region" x="881" y="570" text-anchor="end" letter-spacing="4">AMERICA</text>
          <rect x="1036" y="645" width="17" height="12" fill="#f6d0b2" stroke="#ee7a2b" stroke-width="6.5"></rect>
        </svg>
      </div>
      <div class="credit"><svg class="flag" viewBox="0 0 15 10"><path fill="#4f78dc" d="M0 0h15v5H0z"></path><path fill="#f8d13e" d="M0 5h15v5H0z"></path></svg><span><b>Leaflet</b> | © <b>OpenStreetMap</b> contributors © <b>CARTO</b></span></div>
    `;
  }
}

@customElement("age-chart")
class AgeChart extends LitElement {
  static styles = css`
    :host { display: block; height: 800px; }
    svg { display: block; width: 1000px; height: 800px; overflow: visible; font-family: "Noto Sans CJK JP", "Noto Sans", sans-serif; }
    .title { font-size: 29px; font-weight: 700; fill: #b0b0b0; stroke: #b0b0b0; stroke-width: .4; }
    .num { font-size: 21.5px; fill: #b4b4b4; text-anchor: end; }
    .tick { font-size: 18.3px; fill: #b4b4b4; font-weight: 350; }
    .axis { font-size: 26px; fill: #e6eaf1; stroke: #e6eaf1; stroke-width: .4; text-anchor: middle; }
    .grid { stroke: #101214; stroke-width: 2; }
    .base { stroke: #333947; stroke-width: 2; }
    .shade { fill: #08090c; }
    .grip { fill: #fff; stroke: #444; stroke-width: 2; }
  `;

  render() {
    const zero = 528;
    const y = (v: number) => zero - v * 14.3;
    const left = 136, right = 932, step = 82.45;
    return html`<svg viewBox="0 0 1000 800">
      <defs><clipPath id="plot"><rect x=${left} y="100" width=${right - left} height=${zero - 99}></rect></clipPath></defs>
      <text class="title" x="8" y="49.5" textLength="547">Population Distribution by Age and Sex</text>
      ${[0, 5, 10, 15, 20, 25].map((v) => svg`
        <path class="grid" d="M${left} ${y(v)}H${right}"></path>
        <text class="num" x="118" y=${y(v) + 8.4}>${v}</text>`)}
      <path class="base" d="M${left} ${zero}H${right}"></path>
      <g clip-path="url(#plot)">
        ${BARS.map(([, v], i) => svg`<rect x=${102.8 + i * step + 0.5} y=${y(v) + 0.5} width="65" height=${zero - y(v)} fill=${gray(v)} stroke="#2a2a2a" stroke-width="1"></rect>`)}
      </g>
      ${BARS.map(([t], i) => svg`<text class="tick" transform="translate(${133.3 + i * step} 558.5) rotate(45)" x="0" y="6">${t}</text>`)}
      <text class="axis" transform="translate(41.8 313) rotate(-90)" textLength="205">Population Count</text>
      <rect class="shade" x=${left} y="696" width="317" height="105"></rect>
      <rect class="shade" x="610" y="696" width="322" height="105"></rect>
      ${OVERVIEW.map((h, i) => {
        const x = left + 1.6 + i * 16.245;
        return h ? svg`<rect x=${x} y=${801 - h} width="13" height=${h} fill=${gray(h * 0.286, x > 450 && x < 605 ? 1 : 0.58)}></rect>` : svg``;
      })}
      <rect class="grip" x="447.5" y="723" width="7" height="52" rx="1"></rect>
      <rect class="grip" x="607.5" y="723" width="7" height="52" rx="1"></rect>
      <text class="axis" x="534" y="863" textLength="121">Age Group</text>
    </svg>`;
  }
}

@customElement("app-root")
class AppRoot extends LitElement {
  static styles = css`
    :host { display: block; box-sizing: border-box; width: 2720px; height: 1292px; overflow: hidden; background: #0e1117; color: #fafafa; padding: 55px 66px 0; font-family: "Noto Sans CJK JP", "Noto Sans", sans-serif; }
    h1 { margin: 0; height: 135px; font-size: 79px; line-height: 120px; font-weight: 700; letter-spacing: -.35px; -webkit-text-stroke: 1.2px #fafafa; white-space: nowrap; }
    h2 { margin: 0; height: 128px; box-sizing: border-box; padding-bottom: 8px; font-size: 49px; line-height: 110px; font-weight: 600; letter-spacing: -.4px; display: flex; align-items: center; gap: 16px; white-space: nowrap; }
    .cols { display: grid; grid-template-columns: 1556px 1000px; gap: 32px; }
    .note { margin: 81px 0 0; font-size: 28.6px; line-height: 60px; -webkit-text-stroke: .3px #fafafa; }
    .emoji { width: 48px; height: 56px; position: relative; top: -1px; }
  `;

  render() {
    return html`
      <h1>Census Data Dashboard</h1>
      <div class="cols">
        <section>
          <h2>Location Selector</h2>
          <city-map></city-map>
          <p class="note">Current marker: [40.7128, -74.006]</p>
        </section>
        <section>
          <h2>Census Data Visualization
            <svg class="emoji" viewBox="0 0 48 56">
              <defs><linearGradient id="paper" x1="0" y1="0" x2="0" y2="1"><stop offset="0" stop-color="#d3dade"></stop><stop offset=".6" stop-color="#eef3f6"></stop><stop offset="1" stop-color="#e4e9ec"></stop></linearGradient></defs>
              <rect width="48" height="56" fill="url(#paper)"></rect>
              <path d="M4 0V56M10 0V56M16 0V56M22 0V56M28 0V56M34 0V56M40 0V56M46 0V56M0 4H48M0 9H48M0 14H48M0 19H48M0 24H48M0 29H48M0 34H48M0 39H48M0 44H48M0 49H48" stroke="#bccfe2" stroke-width=".6"></path>
              <path fill="#53b63c" d="M3 20h11.5v36H3z"></path><path fill="#ab2418" d="M19 30h11v26H19z"></path><path fill="#2557b8" d="M35 7.5h11V56H35z"></path>
            </svg>
          </h2>
          <age-chart></age-chart>
        </section>
      </div>
    `;
  }
}
